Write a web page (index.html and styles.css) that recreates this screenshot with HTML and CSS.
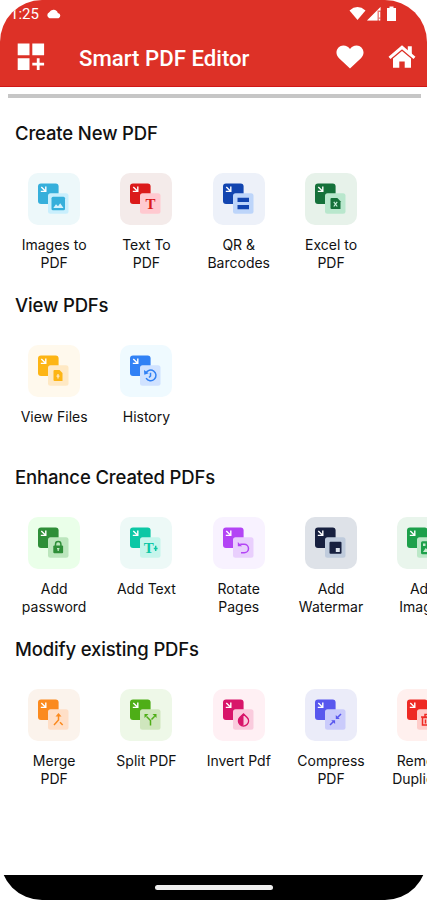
FILE: index.html
```html
<!DOCTYPE html>
<html lang="en">
  <head>
    <meta charset="UTF-8" />
    <meta name="viewport" content="width=device-width, initial-scale=1.0" />
    <title>Smart PDF Editor</title>
    <link rel="stylesheet" href="styles.css">
  </head>
  <body>
    <svg class="defs" width="0" height="0">
      <symbol id="sheets" viewBox="0 0 52 52">
        <rect x="10" y="10.5" width="20.6" height="20.6" rx="3" fill="currentColor" />
        <path d="M13.3 14l3.6 3.6M17.8 13.5v4.9h-5" fill="none" stroke="#fff" stroke-width="1.4" />
        <rect class="front" x="20" y="20.2" width="20.5" height="20.5" rx="2.5" />
      </symbol>
    </svg>
    <div class="phone">
      <header class="header">
        <div class="statusbar">
          <span class="time">1:25</span>
          <svg class="cloud" width="16" height="10" viewBox="0 0 16 10">
            <path d="M3.5 9.3a3.2 3.2 0 0 1-.2-6A4.6 4.6 0 0 1 11.8 3.9a2.8 2.8 0 0 1 .7 5.4z" fill="#fff" />
          </svg>
          <svg class="signals" width="50" height="16" viewBox="0 0 50 16">
            <path d="M.5 4.5Q8.5-2.3 16.5 4.5L8.5 14z" fill="#fff" />
            <path d="M18 14.500L31.500 1v3.500h-3v10z" fill="#fff" />
            <path d="M18 14.500L31.500 1v13.500z" fill="#fff" opacity=".35" />
            <path d="M30.500 6v5.500M30.500 12.800v1.700" stroke="#fff" stroke-width="1.3" />
            <path d="M40.500.5h4V2h2.500v13h-9V2h2.500z" fill="#fff" />
          </svg>
        </div>
        <div class="toolbar">
          <svg class="menu" width="28" height="28" viewBox="0 0 28 28">
            <path d="M.7.5h11.800v11.800H.7zM15.300.5h11.800v11.800H15.300zM.7 15.300h11.800v11.800H.7z" fill="#fff" />
            <path d="M21.200 15.300v11.800M15.300 21.200h11.800" stroke="#fff" stroke-width="2.8" />
          </svg>
          <h1 class="title">Smart PDF Editor</h1>
          <svg class="heart" width="28" height="24" viewBox="0 0 28 24">
            <path d="M14 23.500L2.800 12.900C-2.400 7.500 2 .5 7.300.5c3 0 5.200 1.400 6.700 3.600C15.500 1.900 17.700.5 20.700.5 26 .5 30.400 7.500 25.200 12.900z" fill="#fff" />
          </svg>
          <svg class="home" width="28" height="24" viewBox="0 0 28 24">
            <path d="M1.500 12.800L14 2.300l12.500 10.500" fill="none" stroke="#fff" stroke-width="3" />
            <path d="M19.800 1.200h4v9l-4-3.500z" fill="#fff" />
            <path d="M5 13.400l9-7.500 9 7.500v9.300h-6.300v-6.200h-5.400v6.200H5z" fill="#fff" />
          </svg>
        </div>
      </header>

      <main class="content">
        <section class="group">
          <h2 class="heading">Create New PDF</h2>
          <div class="row">
            <div class="tool">
              <svg class="icon images" viewBox="0 0 52 52">
                <use href="#sheets" />
                <rect x="23.500" y="23.800" width="13.500" height="13.500" rx="1.500" fill="currentColor" />
                <path d="M25.300 35l2.700-3.800 2 2 2.200-3 3.300 4.800z" fill="#d5f2fd" />
              </svg>
              <span class="label">Images to PDF</span>
            </div>
            <div class="tool">
              <svg class="icon text" viewBox="0 0 52 52">
                <use href="#sheets" />
                <text class="letter" x="30.500" y="35.700">T</text>
              </svg>
              <span class="label">Text To PDF</span>
            </div>
            <div class="tool">
              <svg class="icon qr" viewBox="0 0 52 52">
                <use href="#sheets" />
                <path d="M24.500 24.800h11.500v4.200H24.500zM24.500 32h11.500v4.200H24.500z" fill="currentColor" />
              </svg>
              <span class="label">QR &amp; Barcodes</span>
            </div>
            <div class="tool">
              <svg class="icon excel" viewBox="0 0 52 52">
                <use href="#sheets" />
                <path d="M26.500 25h5.800l3.200 3.200V36h-9a1 1 0 0 1-1-1v-9a1 1 0 0 1 1-1z" fill="currentColor" />
                <path d="M28.800 28.800l3.400 4.700M32.200 28.800l-3.400 4.700" stroke="#c7eed9" stroke-width="1.200" />
              </svg>
              <span class="label">Excel to PDF</span>
            </div>
          </div>
        </section>

        <section class="group">
          <h2 class="heading">View PDFs</h2>
          <div class="row">
            <div class="tool">
              <svg class="icon files" viewBox="0 0 52 52">
                <use href="#sheets" />
                <path d="M26.500 25h5l3 3v8h-8a1 1 0 0 1-1-1v-9a1 1 0 0 1 1-1z" fill="currentColor" />
                <path d="M30 29v4.500M28.500 31.200h3" stroke="#ffe9c4" stroke-width="1.300" />
              </svg>
              <span class="label">View Files</span>
            </div>
            <div class="tool">
              <svg class="icon history" viewBox="0 0 52 52">
                <use href="#sheets" />
                <path class="line" d="M25.800 28.300a5.300 5.300 0 1 1 .3 4.800M30.500 27.800v3.200l-1.500 1.500" />
                <path d="M24 25l.3 4.800 4.400-1.600z" fill="currentColor" />
              </svg>
              <span class="label">History</span>
            </div>
          </div>
        </section>

        <section class="group">
          <h2 class="heading">Enhance Created PDFs</h2>
          <div class="row">
            <div class="tool">
              <svg class="icon password" viewBox="0 0 52 52">
                <use href="#sheets" />
                <rect x="25.300" y="28.600" width="9.800" height="7.600" rx="1" fill="currentColor" />
                <path class="line" d="M27.500 29v-1.800a2.700 2.700 0 0 1 5.400 0V29" />
                <path d="M30.200 31v3M29 31.700h2.400" stroke="#c5eac4" stroke-width="1.200" />
              </svg>
              <span class="label">Add password</span>
            </div>
            <div class="tool">
              <svg class="icon addtext" viewBox="0 0 52 52">
                <use href="#sheets" />
                <text class="letter" x="28.700" y="35.700">T</text>
                <path d="M35.700 28.800v5.200M33.800 31.400h3.800" stroke="currentColor" stroke-width="1.500" />
              </svg>
              <span class="label">Add Text</span>
            </div>
            <div class="tool">
              <svg class="icon rotate" viewBox="0 0 52 52">
                <use href="#sheets" />
                <path class="line" d="M27.200 27.200h4a4.200 4.200 0 0 1 0 8.600h-3.200" />
                <path d="M24.800 25v4.300h4.300z" fill="currentColor" />
              </svg>
              <span class="label">Rotate Pages</span>
            </div>
            <div class="tool">
              <svg class="icon watermark" viewBox="0 0 52 52">
                <use href="#sheets" />
                <rect x="24.500" y="24.700" width="12" height="12" rx="1" fill="currentColor" />
                <rect x="30.800" y="31" width="4" height="4" fill="#dce3ed" />
              </svg>
              <span class="label">Add Watermar</span>
            </div>
            <div class="tool">
              <svg class="icon addimage" viewBox="0 0 52 52">
                <use href="#sheets" />
                <rect x="24" y="24.300" width="13" height="13" rx="1.500" fill="currentColor" />
                <path d="M26 35l2.700-4 2 2 2-3 3 5zM26 26.500h2.500V29H26z" fill="#c7edcf" />
              </svg>
              <span class="label">Add Images</span>
            </div>
          </div>
        </section>

        <section class="group">
          <h2 class="heading">Modify existing PDFs</h2>
          <div class="row">
            <div class="tool">
              <svg class="icon merge" viewBox="0 0 52 52">
                <use href="#sheets" />
                <path class="line" d="M30.500 26v5l-4.500 5M32 33.200l2.700 2.800" />
                <path d="M30.500 24l3 3.500h-6z" fill="currentColor" />
              </svg>
              <span class="label">Merge PDF</span>
            </div>
            <div class="tool">
              <svg class="icon split" viewBox="0 0 52 52">
                <use href="#sheets" />
                <path class="line" d="M30.500 36.500v-5l-4-4M31.500 30.500l3.200-3.200" />
                <path d="M24.500 25h4l-4 4zM36.500 25v4l-4-4z" fill="currentColor" />
              </svg>
              <span class="label">Split PDF</span>
            </div>
            <div class="tool">
              <svg class="icon invert" viewBox="0 0 52 52">
                <use href="#sheets" />
                <path class="line" d="M30.500 25l3.600 3.500a5 5 0 1 1-7.200 0z" />
                <path d="M30.500 25v11.800a5 5 0 0 1-3.600-8.300z" fill="currentColor" />
              </svg>
              <span class="label">Invert Pdf</span>
            </div>
            <div class="tool">
              <svg class="icon compress" viewBox="0 0 52 52">
                <use href="#sheets" />
                <path class="line" d="M25 36l3.500-3.500M32.500 28.500L36 25" />
                <path d="M26.200 31.200h3.900v3.900zM30.800 26v3.900h3.900z" fill="currentColor" />
              </svg>
              <span class="label">Compress PDF</span>
            </div>
            <div class="tool">
              <svg class="icon duplicate" viewBox="0 0 52 52">
                <use href="#sheets" />
                <path class="line" d="M25.500 28.500h9v7.500h-9zM24 28h12M28 28v-2.500h4V28M28.500 30.500v4M31.500 30.500v4" />
              </svg>
              <span class="label">Remove Duplicate</span>
            </div>
          </div>
        </section>
      </main>

      <footer class="navbar">
        <div class="handle"></div>
      </footer>
    </div>
  </body>
</html>
```

FILE: styles.css
```css
* {
  box-sizing: border-box;
}
body {
  margin: 0;
  background: #fff;
  color: #111;
  font-family: Inter, "Liberation Sans", sans-serif;
}
.defs {
  display: none;
}
.phone {
  display: flex;
  flex-direction: column;
  width: 427px;
  height: 900px;
  border-radius: 42px;
  overflow: hidden;
}

.header {
  height: 87px;
  background: #dd3127;
  border-bottom: 1px solid #cf1717;
  color: #fff;
  font-family: Roboto, sans-serif;
}
.statusbar {
  display: flex;
  align-items: center;
  height: 28px;
  padding: 0 28px 0 10px;
}
.time {
  width: 36px;
  font-size: 15px;
}
.signals {
  margin-left: auto;
}
.toolbar {
  display: flex;
  align-items: center;
  height: 58px;
  padding: 0 11px 0 17px;
}
.title {
  margin: 1px auto 0 34px;
  font-size: 22.2px;
  font-weight: 500;
  line-height: 30px;
}
.home {
  margin-left: 24px;
}

.content {
  flex: 1;
  margin-top: 7px;
}
.content::before {
  content: "";
  display: block;
  height: 4px;
  margin: 0 6px 0 8px;
  background: #c6c6c6;
}
.group {
  height: 172px;
  padding-top: 22px;
}
.heading {
  margin: 0 0 26.5px 15px;
  font-size: 18.5px;
  font-weight: 500;
  line-height: 26px;
  letter-spacing: -0.14px;
}
.row {
  display: flex;
  padding-left: 8px;
}
.tool {
  display: flex;
  flex: none;
  flex-direction: column;
  align-items: center;
  width: 92.3px;
}
.label {
  width: 70px;
  margin-top: 11px;
  font-size: 14px;
  line-height: 18px;
  text-align: center;
}

.icon {
  width: 52px;
  height: 52px;
  border-radius: 10px;
}
.front {
  fill: var(--front);
}
.line {
  fill: none;
  stroke: currentColor;
  stroke-width: 1.5;
}
.letter {
  fill: currentColor;
  font: bold 15px "Liberation Serif", serif;
  text-anchor: middle;
}
.images {
  color: #36afdb;
  background: #edf8fa;
  --front: #c9effd;
}
.text {
  color: #db1a1a;
  background: #f4ebea;
  --front: #ffc9d0;
}
.qr {
  color: #1245b0;
  background: #edf1f9;
  --front: #bdd5fa;
}
.excel {
  color: #15713a;
  background: #e7f2ea;
  --front: #b9e7cd;
}
.files {
  color: #fdb515;
  background: #fff9ed;
  --front: #ffe9c4;
}
.history {
  color: #3181f5;
  background: #effaff;
  --front: #d0e2ff;
}
.password {
  color: #2e8e38;
  background: #eaffe9;
  --front: #bce6bd;
}
.addtext {
  color: #0cc7a5;
  background: #edf9f7;
  --front: #c6f5ec;
}
.rotate {
  color: #b344f5;
  background: #f8f2ff;
  --front: #e9cffd;
}
.watermark {
  color: #17203f;
  background: #dee2e8;
  --front: #bfcbdc;
}
.addimage {
  color: #1da04b;
  background: #e9f5ec;
  --front: #bce8c8;
}
.merge {
  color: #fb8a1e;
  background: #fbf3ec;
  --front: #ffdfc7;
}
.split {
  color: #4eae17;
  background: #eef8e8;
  --front: #cfe6bd;
}
.invert {
  color: #d8156a;
  background: #fff0f4;
  --front: #facbdd;
}
.compress {
  color: #5857ee;
  background: #ebecf9;
  --front: #cacbfb;
}
.duplicate {
  color: #ee2a24;
  background: #fff0ee;
  --front: #ffcdca;
}

.navbar {
  display: flex;
  align-items: center;
  justify-content: center;
  height: 25px;
  background: #000;
}
.handle {
  width: 118px;
  height: 5px;
  border-radius: 3px;
  background: #eee;
}
```
